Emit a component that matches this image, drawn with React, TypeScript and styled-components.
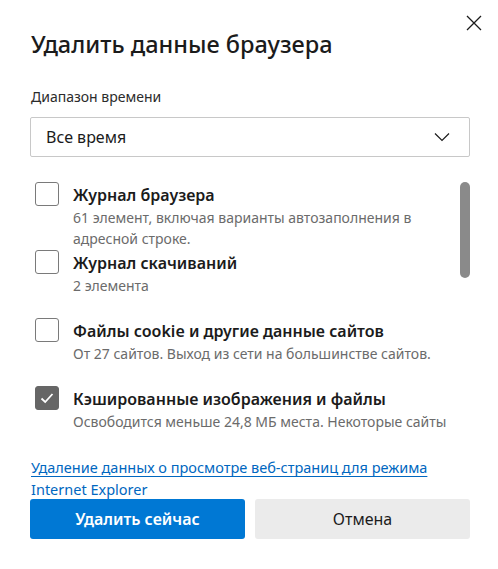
import React from "react";
import styled, { createGlobalStyle } from "styled-components";

const Global = createGlobalStyle`
  html, body { margin: 0; padding: 0; background: #ffffff; }
  body { font-family: "Segoe UI", "Noto Sans", "Open Sans", sans-serif; color: #1b1b1b; }
  * { box-sizing: border-box; }
`;

const Dialog = styled.div`
  position: relative;
  width: 498px;
  height: 569px;
  padding: 26px 28px 0 30px;
  display: flex;
  flex-direction: column;
  background: #fff;
`;

const CloseButton = styled.button`
  position: absolute;
  top: 14px;
  right: 15px;
  width: 18px;
  height: 18px;
  padding: 0;
  border: none;
  background: transparent;
  display: flex;
  align-items: center;
  justify-content: center;
  color: #1b1b1b;
`;

const Title = styled.h1`
  margin: 0 0 0 1px;
  font-size: 23.5px;
  line-height: 36px;
  font-weight: 500;
  color: #1b1b1b;
`;

const FieldLabel = styled.div`
  margin: 25px 0 0 1px;
  font-size: 14px;
  line-height: 20px;
  color: #2b2b2b;
`;

const Select = styled.div`
  margin-top: 10px;
  height: 40px;
  border: 1px solid #c8c8c8;
  border-radius: 2px;
  display: flex;
  align-items: center;
  justify-content: space-between;
  padding: 0 19px 0 15px;
  font-size: 16px;
  color: #1b1b1b;
`;

const ListArea = styled.div`
  margin-top: 14px;
  height: 261px;
  overflow: hidden;
  display: flex;
`;

const Items = styled.div`
  flex: 1;
  min-width: 0;
  padding: 11px 0 0 5px;
  display: flex;
  flex-direction: column;
`;

const Item = styled.div`
  display: flex;
  gap: 14px;
  min-height: 64px;
  margin-bottom: 4px;
`;

const Box = styled.div<{ $checked?: boolean }>`
  flex: none;
  width: 24px;
  height: 24px;
  border-radius: 3px;
  border: 1px solid ${(p) => (p.$checked ? "#666666" : "#7a7a7a")};
  background: ${(p) => (p.$checked ? "#666666" : "#fff")};
  display: flex;
  align-items: center;
  justify-content: center;
`;

const ItemText = styled.div`
  flex: 1;
  min-width: 0;
  display: flex;
  flex-direction: column;
  padding-top: 1px;
`;

const ItemTitle = styled.div`
  font-size: 16px;
  line-height: 24px;
  font-weight: 600;
  color: #1b1b1b;
`;

const ItemDesc = styled.div`
  font-size: 14px;
  line-height: 21px;
  color: #6b6b6b;
  white-space: pre-line;
`;

const ScrollTrack = styled.div`
  flex: none;
  width: 10px;
  padding-top: 11px;
`;

const Thumb = styled.div`
  width: 10px;
  height: 96px;
  border-radius: 5px;
  background: #8a8a8a;
`;

const Link = styled.a`
  margin: 24px 0 0 1px;
  font-size: 14.5px;
  line-height: 22px;
  color: #0067c0;
  text-decoration: none;
  cursor: pointer;
`;

const Underlined = styled.span`
  text-decoration: underline;
  text-underline-offset: 3px;
`;

const Buttons = styled.div`
  margin-top: -1px;
  display: grid;
  grid-template-columns: 1fr 1fr;
  gap: 10px;
`;

const Button = styled.button<{ $primary?: boolean }>`
  height: 40px;
  border: none;
  border-radius: 3px;
  font-family: inherit;
  font-size: 16px;
  font-weight: ${(p) => (p.$primary ? 600 : 400)};
  background: ${(p) => (p.$primary ? "#0078d4" : "#ebebeb")};
  color: ${(p) => (p.$primary ? "#fff" : "#1b1b1b")};
`;

const items = [
  {
    title: "Журнал браузера",
    desc: "61 элемент, включая варианты автозаполнения в\nадресной строке.",
    checked: false,
  },
  { title: "Журнал скачиваний", desc: "2 элемента", checked: false },
  {
    title: "Файлы cookie и другие данные сайтов",
    desc: "От 27 сайтов. Выход из сети на большинстве сайтов.",
    checked: false,
  },
  {
    title: "Кэшированные изображения и файлы",
    desc: "Освободится меньше 24,8 МБ места. Некоторые сайты",
    checked: true,
  },
];

export default function App() {
  return (
    <>
      <Global />
      <Dialog>
        <CloseButton aria-label="Закрыть">
          <svg width="16" height="16" viewBox="0 0 16 16">
            <path d="M1 1L15 15M15 1L1 15" stroke="#1b1b1b" strokeWidth="1.3" fill="none" />
          </svg>
        </CloseButton>
        <Title>Удалить данные браузера</Title>
        <FieldLabel>Диапазон времени</FieldLabel>
        <Select>
          <span>Все время</span>
          <svg width="16" height="10" viewBox="0 0 16 10">
            <path d="M1 1.5L8 8.5L15 1.5" stroke="#1b1b1b" strokeWidth="1.2" fill="none" />
          </svg>
        </Select>
        <ListArea>
          <Items>
            {items.map((it) => (
              <Item key={it.title}>
                <Box $checked={it.checked}>
                  {it.checked && (
                    <svg width="16" height="16" viewBox="0 0 16 16">
                      <path d="M2.5 8.5L6.2 12L13.5 4" stroke="#fff" strokeWidth="1.8" fill="none" />
                    </svg>
                  )}
                </Box>
                <ItemText>
                  <ItemTitle>{it.title}</ItemTitle>
                  <ItemDesc>{it.desc}</ItemDesc>
                </ItemText>
              </Item>
            ))}
          </Items>
          <ScrollTrack>
            <Thumb />
          </ScrollTrack>
        </ListArea>
        <Link>
          <Underlined>Удаление данных о просмотре веб-страниц для режима</Underlined>
          <br />
          Internet Explorer
        </Link>
        <Buttons>
          <Button $primary>Удалить сейчас</Button>
          <Button>Отмена</Button>
        </Buttons>
      </Dialog>
    </>
  );
}
